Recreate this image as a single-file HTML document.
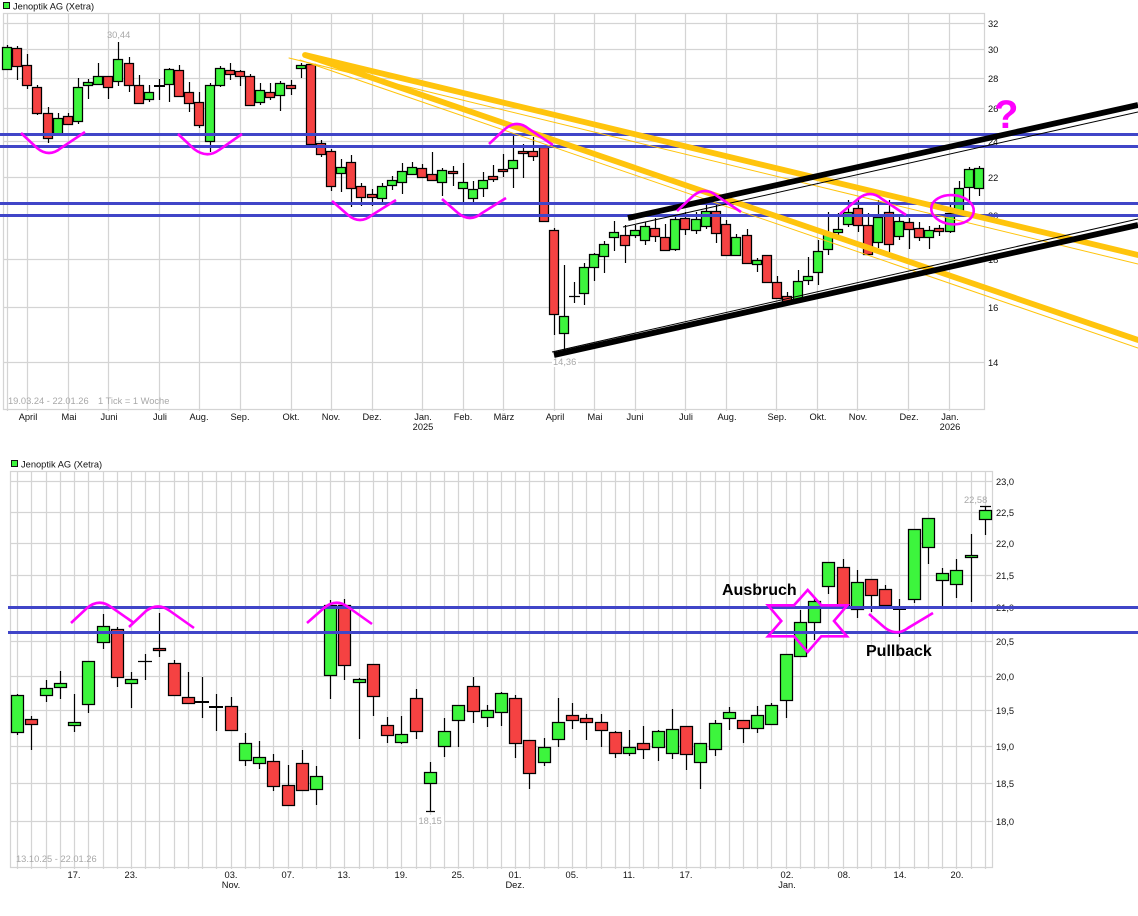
<!DOCTYPE html>
<html><head><meta charset="utf-8"><title>Jenoptik AG (Xetra)</title>
<style>
html,body{margin:0;padding:0;background:#fff;width:1138px;height:916px;overflow:hidden}
svg{display:block}
text{font-family:"Liberation Sans",sans-serif;font-size:9.3px;fill:#111}
.m text{text-anchor:middle}
.q text,text.q{fill:#a8a8a8}
</style></head><body>
<svg width="1138" height="916" viewBox="0 0 1138 916" xmlns="http://www.w3.org/2000/svg">
<rect width="1138" height="916" fill="#fff"/>

<!-- TOP GRID -->
<g fill="none" stroke="#d4d4d4" stroke-width="1.25">
<path d="M3.5 13.5H984.5V409.5H3.5ZM3.5 23.5H984.5M3.5 49.5H984.5M3.5 78.5H984.5M3.5 108.5H984.5M3.5 141.5H984.5M3.5 177.5H984.5M3.5 215.5H984.5M3.5 259.5H984.5M3.5 307.5H984.5M3.5 362.5H984.5"/>
<path d="M7.5 13V411M27.5 13V411M68.5 13V411M108.5 13V411M159.5 13V411M199.5 13V411M240.5 13V411M291.5 13V411M331.5 13V411M372.5 13V411M422.5 13V411M463.5 13V411M503.5 13V411M554.5 13V411M594.5 13V411M635.5 13V411M685.5 13V411M726.5 13V411M776.5 13V411M817.5 13V411M857.5 13V411M908.5 13V411M949.5 13V411"/>
</g>

<!-- TOP LABELS -->
<rect x="3.5" y="2.5" width="6" height="6" fill="#3cf53c" stroke="#111"/>
<text x="13" y="9.5">Jenoptik AG (Xetra)</text>
<g><text x="988" y="27">32</text><text x="988" y="53">30</text><text x="988" y="82">28</text><text x="988" y="112">26</text><text x="988" y="145">24</text><text x="988" y="181">22</text><text x="988" y="219">20</text><text x="988" y="263">18</text><text x="988" y="311">16</text><text x="988" y="366">14</text></g>
<g class="m"><text x="28" y="420">April</text><text x="69" y="420">Mai</text><text x="109" y="420">Juni</text><text x="160" y="420">Juli</text><text x="199" y="420">Aug.</text><text x="240" y="420">Sep.</text><text x="291" y="420">Okt.</text><text x="331" y="420">Nov.</text><text x="372" y="420">Dez.</text><text x="423" y="420">Jan.</text><text x="423" y="430">2025</text><text x="463" y="420">Feb.</text><text x="504" y="420">März</text><text x="555" y="420">April</text><text x="595" y="420">Mai</text><text x="635" y="420">Juni</text><text x="686" y="420">Juli</text><text x="727" y="420">Aug.</text><text x="777" y="420">Sep.</text><text x="818" y="420">Okt.</text><text x="858" y="420">Nov.</text><text x="909" y="420">Dez.</text><text x="950" y="420">Jan.</text><text x="950" y="430">2026</text></g>
<g class="q"><text x="8" y="404">19.03.24 - 22.01.26</text><text x="98" y="404">1 Tick = 1 Woche</text><text x="107" y="38">30,44</text><rect x="552" y="357" width="26" height="10" fill="#fff"/><text x="553" y="365">14,36</text></g>

<!-- TOP WICKS -->
<path fill="none" stroke="#000" stroke-width="1.2" d="M7.5 45V69M17.5 46V80M27.5 54V89M37.5 85V115M48.5 107V143M58.5 113V134M68.5 113V124M78.5 78V124M88.5 79V99M98.5 63V84M108.5 76V99M118.5 42V86M129.5 57V92M139.5 75V104M149.5 85V102M159.5 79V100M169.5 68V102M179.5 65V96M189.5 82V112M199.5 92V128M210.5 83V152M220.5 66V87M230.5 63V80M240.5 70V86M250.5 74V105M260.5 83V105M270.5 83V100M280.5 81V111M291.5 80V95M301.5 63V78M311.5 63V144M321.5 140V157M331.5 149V191M341.5 159V192M351.5 155V207M361.5 183V206M372.5 189V206M382.5 183V203M392.5 176V190M402.5 163V194M412.5 162V174M422.5 164V177M432.5 152V180M442.5 168V196M453.5 166V186M463.5 163V202M473.5 181V202M483.5 172V197M493.5 165V182M503.5 154V177M513.5 136V188M523.5 144V178M533.5 137V161M544.5 145V221M554.5 228V335M564.5 265V352M574.5 282V303M584.5 263V305M594.5 253V281M604.5 241V273M614.5 221V251M625.5 225V263M635.5 225V238M645.5 222V245M655.5 218V242M665.5 224V251M675.5 216V251M685.5 212V235M696.5 212V234M706.5 205V229M716.5 205V243M726.5 220V255M736.5 234V255M747.5 229V263M757.5 258V272M767.5 255V282M777.5 276V298M787.5 292V304M798.5 270V299M808.5 257V285M818.5 240V285M828.5 212V255M838.5 213V235M848.5 200V227M858.5 198V232M868.5 213V255M878.5 200V248M889.5 200V252M899.5 215V240M909.5 218V249M919.5 222V241M929.5 226V249M939.5 225V236M950.5 204V233M959.5 181V215M969.5 167V203M979.5 166V196M569 296.5H580"/>
<path fill="none" stroke="#000" stroke-width="2" d="M154 86H165"/>

<!-- TOP BODIES -->
<path fill="#3df53d" stroke="#000" stroke-width="1.25" d="M2.5 47.5h9V69.5h-9zM53.5 118.5h9V134.5h-9zM73.5 87.5h9V121.5h-9zM83.5 82.5h9V85.5h-9zM93.5 76.5h9V84.5h-9zM113.5 59.5h9V81.5h-9zM144.5 92.5h9V99.5h-9zM164.5 69.5h9V84.5h-9zM205.5 85.5h9V141.5h-9zM215.5 68.5h9V85.5h-9zM255.5 90.5h9V102.5h-9zM275.5 83.5h9V95.5h-9zM296.5 65.5h9V68.5h-9zM336.5 167.5h9V173.5h-9zM377.5 186.5h9V198.5h-9zM387.5 180.5h9V185.5h-9zM397.5 171.5h9V182.5h-9zM407.5 167.5h9V174.5h-9zM437.5 170.5h9V182.5h-9zM458.5 182.5h9V188.5h-9zM468.5 189.5h9V198.5h-9zM478.5 180.5h9V188.5h-9zM508.5 160.5h9V168.5h-9zM559.5 316.5h9V333.5h-9zM579.5 267.5h9V293.5h-9zM589.5 254.5h9V267.5h-9zM599.5 244.5h9V256.5h-9zM609.5 232.5h9V237.5h-9zM630.5 230.5h9V235.5h-9zM640.5 226.5h9V240.5h-9zM670.5 219.5h9V249.5h-9zM691.5 219.5h9V230.5h-9zM701.5 211.5h9V226.5h-9zM731.5 237.5h9V255.5h-9zM752.5 260.5h9V264.5h-9zM793.5 281.5h9V299.5h-9zM803.5 276.5h9V280.5h-9zM813.5 251.5h9V272.5h-9zM823.5 233.5h9V249.5h-9zM833.5 229.5h9V232.5h-9zM843.5 212.5h9V224.5h-9zM873.5 217.5h9V242.5h-9zM894.5 221.5h9V236.5h-9zM924.5 230.5h9V237.5h-9zM945.5 213.5h9V231.5h-9zM954.5 188.5h9V210.5h-9zM964.5 169.5h9V187.5h-9zM974.5 168.5h9V188.5h-9z"/>
<path fill="#f54242" stroke="#000" stroke-width="1.25" d="M12.5 48.5h9V66.5h-9zM22.5 65.5h9V85.5h-9zM32.5 87.5h9V113.5h-9zM43.5 113.5h9V138.5h-9zM63.5 116.5h9V124.5h-9zM103.5 76.5h9V87.5h-9zM124.5 63.5h9V85.5h-9zM134.5 85.5h9V103.5h-9zM174.5 70.5h9V96.5h-9zM184.5 92.5h9V103.5h-9zM194.5 102.5h9V125.5h-9zM225.5 70.5h9V74.5h-9zM235.5 71.5h9V76.5h-9zM245.5 76.5h9V105.5h-9zM265.5 92.5h9V97.5h-9zM286.5 85.5h9V88.5h-9zM306.5 64.5h9V144.5h-9zM316.5 143.5h9V154.5h-9zM326.5 151.5h9V186.5h-9zM346.5 162.5h9V188.5h-9zM356.5 186.5h9V197.5h-9zM367.5 194.5h9V197.5h-9zM417.5 168.5h9V177.5h-9zM427.5 174.5h9V180.5h-9zM448.5 171.5h9V173.5h-9zM488.5 176.5h9V179.5h-9zM498.5 169.5h9V171.5h-9zM518.5 151.5h9V153.5h-9zM528.5 151.5h9V156.5h-9zM539.5 147.5h9V221.5h-9zM549.5 230.5h9V314.5h-9zM620.5 235.5h9V245.5h-9zM650.5 228.5h9V236.5h-9zM660.5 237.5h9V250.5h-9zM680.5 218.5h9V229.5h-9zM711.5 211.5h9V233.5h-9zM721.5 224.5h9V255.5h-9zM742.5 235.5h9V263.5h-9zM762.5 255.5h9V282.5h-9zM772.5 282.5h9V298.5h-9zM782.5 296.5h9V301.5h-9zM853.5 208.5h9V225.5h-9zM863.5 225.5h9V254.5h-9zM884.5 212.5h9V244.5h-9zM904.5 222.5h9V229.5h-9zM914.5 228.5h9V237.5h-9zM934.5 228.5h9V231.5h-9z"/>

<!-- TOP BLUE -->
<path fill="none" stroke="#4045c8" stroke-width="3" d="M0 134.5H1138M0 146.5H1138M0 203.5H1138M0 215.5H1138"/>

<!-- TOP YELLOW -->
<g fill="none" stroke="#ffc40d" stroke-linecap="round">
<path stroke-width="5.8" d="M305 55L1138 255M305 55L1138 340"/>
<path stroke-width="1" d="M289 58L1138 264M300 60L1138 348"/>
</g>
<!-- TOP BLACK -->
<g fill="none" stroke="#000">
<path stroke-width="5.8" d="M628 218L1138 105M554 355L1138 225"/>
<path stroke-width="1" d="M623 227L1138 112M552 352L1138 219"/>
</g>
<!-- TOP MAGENTA -->
<g fill="none" stroke="#ff00ff" stroke-width="2.6">
<path d="M21 133L37 148Q49 158 61 148L85 132"/>
<path d="M178 134L194 149Q207 159 219 150L242 134"/>
<path d="M332 201L348 215Q360 225 372 215L396 200"/>
<path d="M442 199L458 213Q470 223 482 213L506 198"/>
<path d="M489 144L505 129Q517 119 529 129L553 145"/>
<path d="M677 211L693 196Q705 186 717 196L741 212"/>
<path d="M840 214L858 199Q870 189 882 199L906 215"/>
<ellipse cx="952.5" cy="209.7" rx="21.3" ry="14.6" transform="rotate(5 952.5 209.7)"/>
</g>
<text x="994" y="128" style="font-size:40px;font-weight:bold;fill:#ff00ff">?</text>

<!-- BOTTOM GRID -->
<g fill="none" stroke="#d4d4d4" stroke-width="1.25">
<path d="M10.5 471.5H992.5V867.5H10.5ZM10.5 481.5H992.5M10.5 512.5H992.5M10.5 543.5H992.5M10.5 575.5H992.5M10.5 607.5H992.5M10.5 641.5H992.5M10.5 676.5H992.5M10.5 710.5H992.5M10.5 746.5H992.5M10.5 783.5H992.5M10.5 821.5H992.5"/>
<path d="M17.5 471V869M31.5 471V869M46.5 471V869M60.5 471V869M74.5 471V869M88.5 471V869M103.5 471V869M117.5 471V869M131.5 471V869M145.5 471V869M159.5 471V869M174.5 471V869M188.5 471V869M202.5 471V869M216.5 471V869M231.5 471V869M245.5 471V869M259.5 471V869M273.5 471V869M288.5 471V869M302.5 471V869M316.5 471V869M330.5 471V869M344.5 471V869M359.5 471V869M373.5 471V869M387.5 471V869M401.5 471V869M416.5 471V869M430.5 471V869M444.5 471V869M458.5 471V869M473.5 471V869M487.5 471V869M501.5 471V869M515.5 471V869M529.5 471V869M544.5 471V869M558.5 471V869M572.5 471V869M586.5 471V869M601.5 471V869M615.5 471V869M629.5 471V869M643.5 471V869M658.5 471V869M672.5 471V869M686.5 471V869M700.5 471V869M715.5 471V869M729.5 471V869M743.5 471V869M757.5 471V869M771.5 471V869M786.5 471V869M800.5 471V869M814.5 471V869M828.5 471V869M843.5 471V869M857.5 471V869M871.5 471V869M885.5 471V869M899.5 471V869M914.5 471V869M928.5 471V869M942.5 471V869M956.5 471V869M971.5 471V869M985.5 471V869"/>
</g>

<!-- BOTTOM LABELS -->
<rect x="11.5" y="460.5" width="6" height="6" fill="#3cf53c" stroke="#111"/>
<text x="21" y="467.5">Jenoptik AG (Xetra)</text>
<g><text x="996" y="485">23,0</text><text x="996" y="516">22,5</text><text x="996" y="547">22,0</text><text x="996" y="579">21,5</text><text x="996" y="611">21,0</text><text x="996" y="645">20,5</text><text x="996" y="680">20,0</text><text x="996" y="714">19,5</text><text x="996" y="750">19,0</text><text x="996" y="787">18,5</text><text x="996" y="825">18,0</text></g>
<g class="m"><text x="74" y="878">17.</text><text x="131" y="878">23.</text><text x="231" y="878">03.</text><text x="231" y="888">Nov.</text><text x="288" y="878">07.</text><text x="344" y="878">13.</text><text x="401" y="878">19.</text><text x="458" y="878">25.</text><text x="515" y="878">01.</text><text x="515" y="888">Dez.</text><text x="572" y="878">05.</text><text x="629" y="878">11.</text><text x="686" y="878">17.</text><text x="787" y="878">02.</text><text x="787" y="888">Jan.</text><text x="844" y="878">08.</text><text x="900" y="878">14.</text><text x="957" y="878">20.</text></g>
<g class="q"><text x="16" y="862">13.10.25 - 22.01.26</text><text x="964" y="503">22,58</text><rect x="417" y="815" width="27" height="11" fill="#fff"/><text x="418.5" y="824">18,15</text></g>

<!-- BOTTOM WICKS -->
<path fill="none" stroke="#000" stroke-width="1.2" d="M17.5 694V735M31.5 716V750M46.5 680V702M60.5 671V699M74.5 694V732M88.5 661V713M103.5 614V649M117.5 627V687M131.5 672V708M145.5 654V680M159.5 613V657M174.5 660V695M188.5 672V703M202.5 677V718M216.5 694V731M231.5 697V730M245.5 733V766M259.5 741V769M273.5 754V791M288.5 765V805M302.5 750V790M316.5 766V805M330.5 600V699M344.5 599V680M359.5 678V739M373.5 664V716M387.5 717V743M401.5 716V744M416.5 689V739M430.5 762V811M444.5 718V757M458.5 705V747M473.5 677V723M487.5 705V727M501.5 692V726M515.5 695V758M529.5 740V789M544.5 738V766M558.5 698V747M572.5 703V729M586.5 714V740M601.5 714V747M615.5 731V758M629.5 730V756M643.5 726V759M658.5 730V761M672.5 709V759M686.5 726V770M700.5 743V789M715.5 720V756M729.5 707V730M743.5 720V743M757.5 706V733M771.5 703V724M786.5 654V718M800.5 610V656M814.5 597V640M828.5 562V594M843.5 559V607M857.5 570V618M871.5 579V612M885.5 585V609M899.5 599V637M914.5 529V603M928.5 518V564M942.5 568V606M956.5 559V598M971.5 534V602M985.5 506V535M138 661.5H152M426 811.5H435M980 506.5H991"/>
<path fill="none" stroke="#000" stroke-width="2" d="M195 702H209M209 707H223M893 609H906"/>

<!-- BOTTOM BODIES -->
<path fill="#3df53d" stroke="#000" stroke-width="1.25" d="M11.5 695.5h12V732.5h-12zM40.5 688.5h12V695.5h-12zM54.5 683.5h12V687.5h-12zM68.5 722.5h12V725.5h-12zM82.5 661.5h12V704.5h-12zM97.5 626.5h12V642.5h-12zM125.5 679.5h12V683.5h-12zM239.5 743.5h12V760.5h-12zM253.5 757.5h12V763.5h-12zM310.5 776.5h12V789.5h-12zM324.5 605.5h12V675.5h-12zM353.5 679.5h12V682.5h-12zM395.5 734.5h12V742.5h-12zM424.5 772.5h12V783.5h-12zM438.5 731.5h12V746.5h-12zM452.5 705.5h12V720.5h-12zM481.5 710.5h12V717.5h-12zM495.5 693.5h12V712.5h-12zM538.5 747.5h12V762.5h-12zM552.5 722.5h12V739.5h-12zM623.5 747.5h12V753.5h-12zM652.5 731.5h12V747.5h-12zM666.5 729.5h12V753.5h-12zM694.5 743.5h12V762.5h-12zM709.5 723.5h12V749.5h-12zM723.5 712.5h12V718.5h-12zM751.5 715.5h12V728.5h-12zM765.5 705.5h12V724.5h-12zM780.5 654.5h12V700.5h-12zM794.5 622.5h12V656.5h-12zM808.5 601.5h12V622.5h-12zM822.5 562.5h12V586.5h-12zM851.5 582.5h12V609.5h-12zM908.5 529.5h12V599.5h-12zM922.5 518.5h12V547.5h-12zM936.5 573.5h12V580.5h-12zM950.5 570.5h12V584.5h-12zM965.5 555.5h12V557.5h-12zM979.5 510.5h12V519.5h-12z"/>
<path fill="#f54242" stroke="#000" stroke-width="1.25" d="M25.5 719.5h12V724.5h-12zM111.5 629.5h12V677.5h-12zM153.5 648.5h12V650.5h-12zM168.5 663.5h12V695.5h-12zM182.5 697.5h12V703.5h-12zM225.5 706.5h12V730.5h-12zM267.5 761.5h12V786.5h-12zM282.5 785.5h12V805.5h-12zM296.5 763.5h12V790.5h-12zM338.5 605.5h12V665.5h-12zM367.5 664.5h12V696.5h-12zM381.5 725.5h12V735.5h-12zM410.5 698.5h12V731.5h-12zM467.5 686.5h12V711.5h-12zM509.5 698.5h12V743.5h-12zM523.5 740.5h12V773.5h-12zM566.5 715.5h12V720.5h-12zM580.5 718.5h12V722.5h-12zM595.5 722.5h12V730.5h-12zM609.5 732.5h12V753.5h-12zM637.5 743.5h12V749.5h-12zM680.5 726.5h12V754.5h-12zM737.5 720.5h12V728.5h-12zM837.5 567.5h12V607.5h-12zM865.5 579.5h12V595.5h-12zM879.5 589.5h12V605.5h-12z"/>

<!-- BOTTOM BLUE -->
<path fill="none" stroke="#4045c8" stroke-width="3" d="M8 607.5H1138M8 632.5H1138"/>

<!-- BOTTOM MAGENTA -->
<g fill="none" stroke="#ff00ff" stroke-width="2.6">
<path d="M71 623L87 608Q99 598 111 607L134 623"/>
<path d="M129 627L146 611Q158 602 170 611L194 628"/>
<path d="M307 623L324 608Q336 598 348 607L372 624"/>
<path d="M869 614L884 627Q896 637 908 628L933 613"/>
<path d="M807.7 590L821.3 605.3H847.3L834 621L847 636.3H821.3L807.7 652L794 636.3H768L781.3 621L768 605.3H794Z"/>
</g>
<text x="722" y="595" style="font-size:16px;font-weight:bold;fill:#000">Ausbruch</text>
<text x="866" y="656" style="font-size:16px;font-weight:bold;fill:#000">Pullback</text>
</svg>
</body></html>
